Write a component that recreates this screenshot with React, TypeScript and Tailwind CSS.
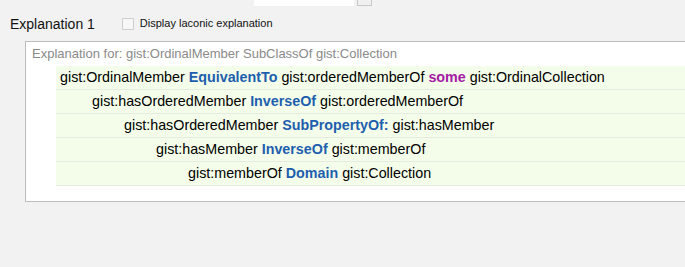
import React from "react";

const rows: { indent: string; parts: [string, string][] }[] = [
  {
    indent: "pl-[4px]",
    parts: [
      ["t", "gist:OrdinalMember "],
      ["k", "EquivalentTo"],
      ["t", " gist:orderedMemberOf "],
      ["p", "some"],
      ["t", " gist:OrdinalCollection"],
    ],
  },
  {
    indent: "pl-[36px]",
    parts: [
      ["t", "gist:hasOrderedMember "],
      ["k", "InverseOf"],
      ["t", " gist:orderedMemberOf"],
    ],
  },
  {
    indent: "pl-[68px]",
    parts: [
      ["t", "gist:hasOrderedMember "],
      ["k", "SubPropertyOf:"],
      ["t", " gist:hasMember"],
    ],
  },
  {
    indent: "pl-[100px]",
    parts: [
      ["t", "gist:hasMember "],
      ["k", "InverseOf"],
      ["t", " gist:memberOf"],
    ],
  },
  {
    indent: "pl-[132px]",
    parts: [
      ["t", "gist:memberOf "],
      ["k", "Domain"],
      ["t", " gist:Collection"],
    ],
  },
];

export default function App() {
  return (
    <div
      className="w-[685px] h-[267px] bg-[#f2f2f2] overflow-hidden flex flex-col"
      style={{ fontFamily: '"Liberation Sans", Arial, sans-serif' }}
    >
      <div className="flex h-[7px] items-start">
        <div className="ml-[254px] w-[100px] h-[6px] bg-white" />
        <div className="ml-[3px] w-[15px] h-[6px] border border-t-0 border-[#c8c8c8] bg-[#f0f0f0]" />
      </div>
      <div className="flex items-center h-[29px] mt-[2px]">
        <span className="ml-[10px] text-[14px] text-[#111] leading-none">Explanation 1</span>
        <span className="ml-[27px] w-[12px] h-[12px] border border-[#cfcfcf] bg-[#f7f7f7]" />
        <span className="ml-[6px] text-[11px] text-[#111] leading-none">Display laconic explanation</span>
      </div>
      <div className="ml-[25px] mt-[3px] h-[161px] border border-r-0 border-[#bdbdbd] bg-white flex flex-col">
        <div className="h-[24px] flex items-center pl-[6px] text-[13px] text-[#8a8a8a] whitespace-pre">
          Explanation for: gist:OrdinalMember SubClassOf gist:Collection
        </div>
        <div className="ml-[30px] flex flex-col">
          {rows.map((r, i) => (
            <div
              key={i}
              className={`h-[24px] flex items-center bg-[#f4fde9] border-b border-[#e6ebe2] text-[14.3px] text-black whitespace-pre ${r.indent}`}
            >
              {r.parts.map(([kind, text], j) =>
                kind === "k" ? (
                  <span key={j} className="font-bold text-[#1d5fae]">{text}</span>
                ) : kind === "p" ? (
                  <span key={j} className="font-bold text-[#a51aa5]">{text}</span>
                ) : (
                  <span key={j}>{text}</span>
                )
              )}
            </div>
          ))}
        </div>
      </div>
    </div>
  );
}
